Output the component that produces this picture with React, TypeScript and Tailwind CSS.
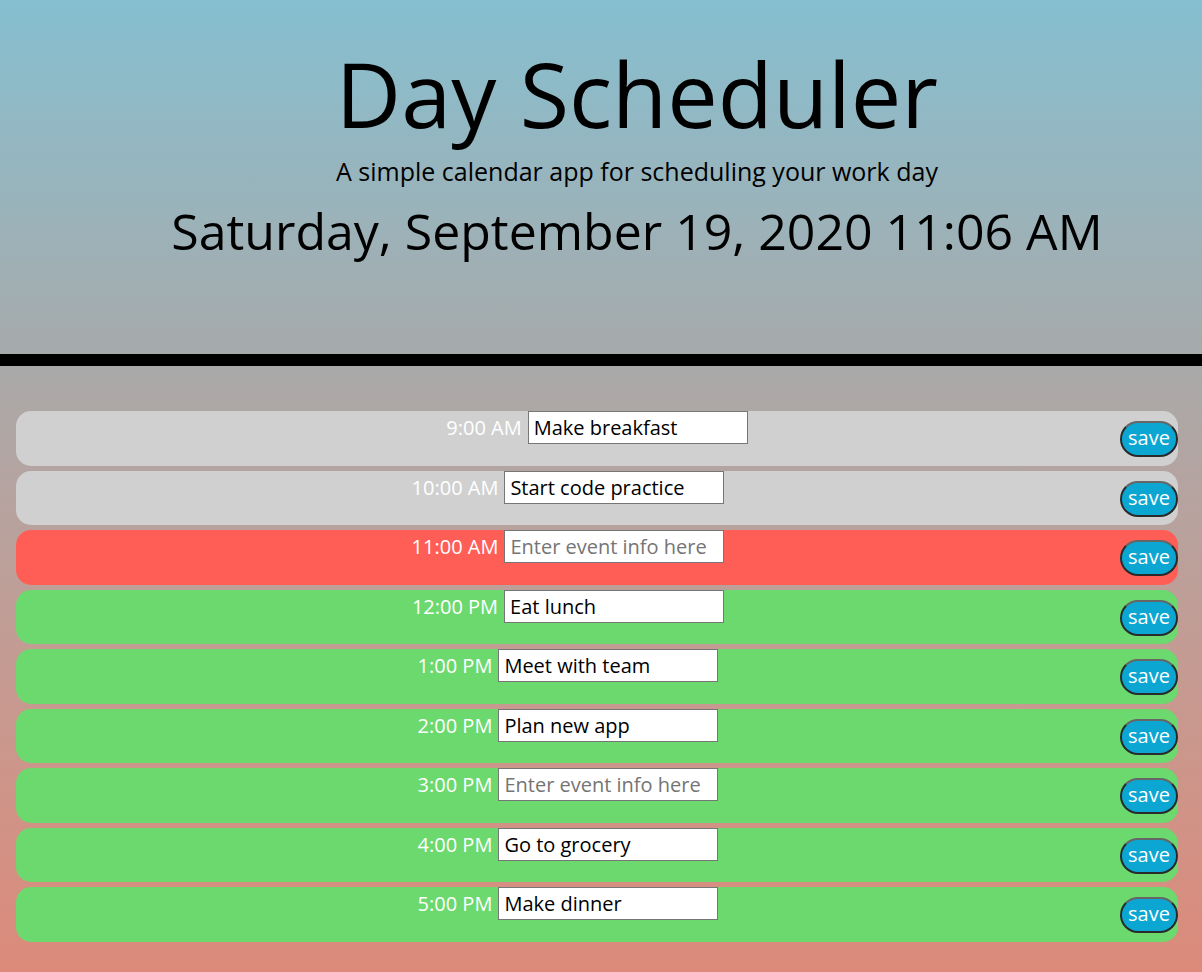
import { useState } from 'react';

type Slot = { hour: string; text: string; state: 'past' | 'present' | 'future' };

const slots: Slot[] = [
  { hour: '9:00 AM', text: 'Make breakfast', state: 'past' },
  { hour: '10:00 AM', text: 'Start code practice', state: 'past' },
  { hour: '11:00 AM', text: '', state: 'present' },
  { hour: '12:00 PM', text: 'Eat lunch', state: 'future' },
  { hour: '1:00 PM', text: 'Meet with team', state: 'future' },
  { hour: '2:00 PM', text: 'Plan new app', state: 'future' },
  { hour: '3:00 PM', text: '', state: 'future' },
  { hour: '4:00 PM', text: 'Go to grocery', state: 'future' },
  { hour: '5:00 PM', text: 'Make dinner', state: 'future' },
];

const rowColor = {
  past: 'bg-[#d0d0d0]',
  present: 'bg-[#ff5e57]',
  future: 'bg-[#6cd96e]',
};

function TimeBlock({ slot, first }: { slot: Slot; first: boolean }) {
  const [value, setValue] = useState(slot.text);
  return (
    <div className={`flex h-[54.5px] items-start rounded-[15px] ${rowColor[slot.state]}`}>
      <div className={`flex flex-1 items-baseline justify-center gap-[6px] ${first ? 'pl-[58px]' : ''}`}>
        <span className="text-[20px] text-white">{slot.hour}</span>
        <input
          value={value}
          onChange={(e) => setValue(e.target.value)}
          placeholder="Enter event info here"
          className="h-[33px] w-[220px] border border-[#767676] bg-white px-[5px] text-[20px] text-black placeholder:text-[#757575] outline-none"
        />
      </div>
      <button className="mt-[2px] h-[36px] w-[58px] self-center rounded-full border-2 border-[#2a2a2a] border-t-[#666] bg-[#0ca6d3] pb-[2px] text-[20px] text-white">
        save
      </button>
    </div>
  );
}

export default function App() {
  return (
    <div className="min-h-screen font-['Open_Sans',sans-serif]">
      {/* Header */}
      <header className="flex h-[365.5px] flex-col items-center border-b-[12px] border-black bg-gradient-to-b from-[#85bfd0] to-[#a6aaab] pl-[72px] pt-[48px] text-black">
        <h1 className="text-[90px] leading-[90px]">Day Scheduler</h1>
        <p className="mt-[18px] text-[25px] leading-[30px]">A simple calendar app for scheduling your work day</p>
        <p className="mt-[17px] text-[50px] leading-[56px]">Saturday, September 19, 2020 11:06 AM</p>
      </header>

      {/* Time blocks */}
      <main className="flex min-h-[606.5px] flex-col gap-[5px] bg-gradient-to-b from-[#a9a9a9] to-[#dc8a7a] pl-4 pr-6 pt-[45.5px] pb-[30px]">
        {slots.map((s, i) => (
          <TimeBlock key={s.hour} slot={s} first={i === 0} />
        ))}
      </main>
    </div>
  );
}
